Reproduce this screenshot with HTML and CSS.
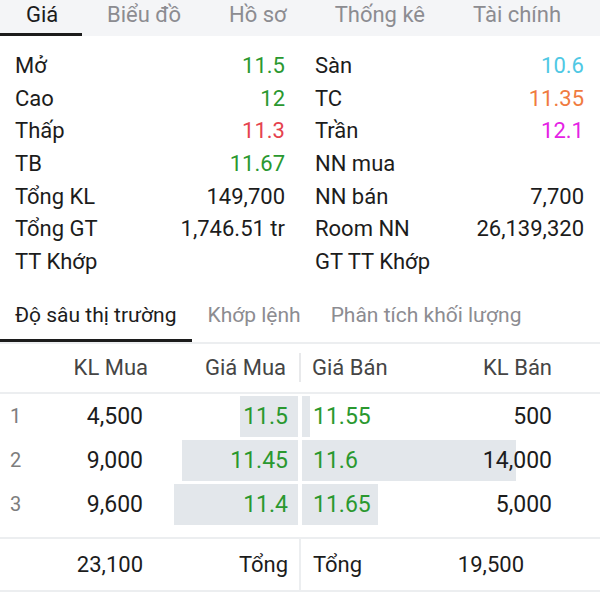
FILE: index.html
```html
<!DOCTYPE html>
<html lang="vi">
<head>
<meta charset="utf-8">
<title>Giá</title>
<link rel="stylesheet" href="styles.css">
</head>
<body>
<div class="app">
  <nav class="tabs">
    <span class="tab active">Giá</span>
    <span class="tab">Biểu đồ</span>
    <span class="tab">Hồ sơ</span>
    <span class="tab">Thống kê</span>
    <span class="tab">Tài chính</span>
  </nav>

  <section class="info">
    <div class="col">
      <div class="row"><span>Mở</span><span class="up">11.5</span></div>
      <div class="row"><span>Cao</span><span class="up">12</span></div>
      <div class="row"><span>Thấp</span><span class="down">11.3</span></div>
      <div class="row"><span>TB</span><span class="up">11.67</span></div>
      <div class="row"><span>Tổng KL</span><span>149,700</span></div>
      <div class="row"><span>Tổng GT</span><span>1,746.51 tr</span></div>
      <div class="row"><span>TT Khớp</span><span></span></div>
    </div>
    <div class="col">
      <div class="row"><span>Sàn</span><span class="floor">10.6</span></div>
      <div class="row"><span>TC</span><span class="ref">11.35</span></div>
      <div class="row"><span>Trần</span><span class="ceil">12.1</span></div>
      <div class="row"><span>NN mua</span><span></span></div>
      <div class="row"><span>NN bán</span><span>7,700</span></div>
      <div class="row"><span>Room NN</span><span>26,139,320</span></div>
      <div class="row"><span>GT TT Khớp</span><span></span></div>
    </div>
  </section>

  <nav class="subtabs">
    <span class="subtab active">Độ sâu thị trường</span>
    <span class="subtab">Khớp lệnh</span>
    <span class="subtab">Phân tích khối lượng</span>
  </nav>

  <div class="book-head">
    <div class="half buy"><span></span><span class="r">KL Mua</span><span class="r">Giá Mua</span></div>
    <div class="vdiv"></div>
    <div class="half sell"><span>Giá Bán</span><span class="r">KL Bán</span></div>
  </div>

  <div class="book">
    <div class="book-row">
      <div class="half buy bar" style="--w:19.48%"><span class="idx">1</span><span class="r">4,500</span><span class="r up">11.5</span></div>
      <div class="half sell bar" style="--w:2.56%"><span class="up">11.55</span><span class="r">500</span></div>
    </div>
    <div class="book-row">
      <div class="half buy bar" style="--w:38.96%"><span class="idx">2</span><span class="r">9,000</span><span class="r up">11.45</span></div>
      <div class="half sell bar" style="--w:71.79%"><span class="up">11.6</span><span class="r">14,000</span></div>
    </div>
    <div class="book-row">
      <div class="half buy bar" style="--w:41.56%"><span class="idx">3</span><span class="r">9,600</span><span class="r up">11.4</span></div>
      <div class="half sell bar" style="--w:25.64%"><span class="up">11.65</span><span class="r">5,000</span></div>
    </div>
  </div>

  <div class="book-total">
    <div class="half buy"><span></span><span class="r">23,100</span><span class="r">Tổng</span></div>
    <div class="vdiv full"></div>
    <div class="half sell total-sell"><span>Tổng</span><span class="r">19,500</span></div>
  </div>
</div>
</body>
</html>
```

FILE: styles.css
```css
* { box-sizing: border-box; }

body {
  margin: 0;
  background: #ffffff;
  font-family: Roboto, "Noto Sans", "Liberation Sans", sans-serif;
  color: #1c1c1c;
}

.app {
  width: 600px;
}

/* top tabs */
.tabs {
  display: flex;
  background: #f4f5f7;
  height: 36px;
}

.tab {
  font-size: 22px;
  line-height: 29px;
  height: 36px;
  color: #8c8c91;
  border-bottom: 3px solid transparent;
  white-space: nowrap;
}

.tab + .tab { margin-left: 48px; }
.tab.active + .tab { margin-left: 25px; }

.tab.active {
  color: #1c1c1c;
  border-bottom-color: #1c1c1c;
  width: 82px;
  padding-left: 26px;
}

/* info */
.info {
  display: grid;
  grid-template-columns: 270px 269px;
  column-gap: 30px;
  padding: 14px 16px 12px 15px;
}

.row {
  display: flex;
  justify-content: space-between;
  font-size: 22px;
  line-height: 32.67px;
  height: 32.67px;
  white-space: nowrap;
}

.up { color: #2a982f; }
.down { color: #e5434e; }
.floor { color: #4fc8e4; }
.ref { color: #f07b3f; }
.ceil { color: #e522e5; }

/* sub tabs */
.subtabs {
  display: flex;
  border-bottom: 2px solid #eceef0;
}

.subtab {
  font-size: 21px;
  line-height: 48px;
  padding: 0 15px;
  color: #8c8c91;
  border-bottom: 3px solid transparent;
  white-space: nowrap;
}

.subtab.active {
  color: #1c1c1c;
  border-bottom-color: #1c1c1c;
  padding-right: 16px;
}

/* order book */
.book-head,
.book-row,
.book-total {
  display: grid;
  grid-template-columns: 298px 4px 298px;
}

.book-head {
  height: 50px;
  border-bottom: 2px solid #eceef0;
  font-size: 22px;
  color: #454545;
}

.book-row {
  grid-template-columns: 298px 298px;
  column-gap: 4px;
  height: 41px;
  margin-top: 3px;
  font-size: 23px;
}

.book {
  padding-bottom: 12px;
}

.book .book-row:first-child { margin-top: 2px; }

.half {
  display: grid;
  align-items: center;
  white-space: nowrap;
}

.half.buy {
  grid-template-columns: 40px 93px 1fr;
  padding: 0 10px;
}

.book-head .half.buy {
  grid-template-columns: 40px 98px 1fr;
  padding-right: 12px;
}

.half.sell {
  grid-template-columns: 1fr auto;
  padding: 0 48px 0 11px;
}

.book-head .half.sell { padding-left: 10px; }

.r { text-align: right; }

.idx {
  font-size: 20px;
  color: #7d7d7d;
}

.buy.bar {
  background: linear-gradient(to left, #e3e7eb var(--w), transparent var(--w));
}

.sell.bar {
  background: linear-gradient(to right, #e3e7eb var(--w), transparent var(--w));
}

.vdiv {
  width: 2px;
  height: 29px;
  background: #e8e9eb;
  justify-self: center;
  align-self: center;
}

.vdiv.full {
  height: 100%;
  align-self: stretch;
  background: #eceef0;
}

.book-total {
  height: 55px;
  border-top: 2px solid #eceef0;
  border-bottom: 2px solid #eceef0;
  font-size: 22px;
}

.half.total-sell { padding-right: 76px; }
```
